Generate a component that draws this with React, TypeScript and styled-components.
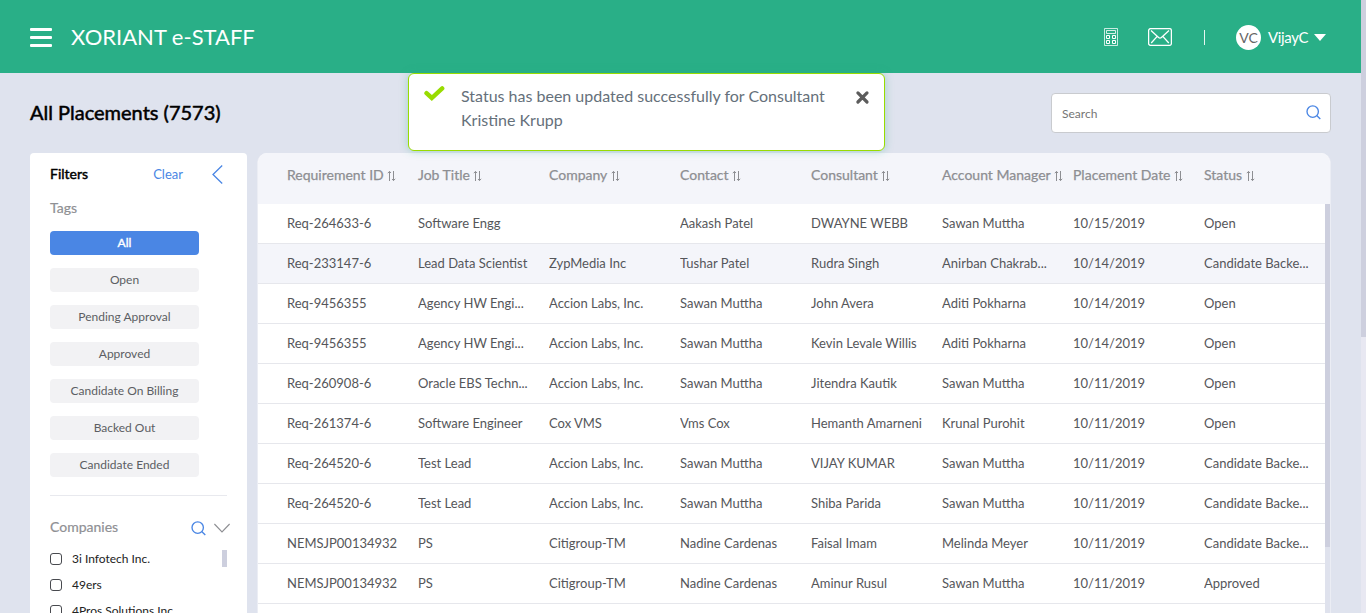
import React from "react";
import styled, { createGlobalStyle } from "styled-components";

const GlobalStyle = createGlobalStyle`
  * { box-sizing: border-box; }
  body {
    margin: 0;
    overflow: hidden;
    background: #dfe3ee;
    font-family: Lato, "Liberation Sans", sans-serif;
    color: #555;
  }
  button, input { font-family: inherit; }
`;

const Page = styled.div`
  display: grid;
  grid-template-columns: 1fr 5px;
  height: 613px;
  overflow: hidden;
`;

const Main = styled.div`
  display: flex;
  flex-direction: column;
  min-width: 0;
  height: 613px;
  overflow: hidden;
`;

const PageTrack = styled.div`
  background: #e8e8f2;
`;

const PageThumb = styled.div`
  height: 337px;
  background: #cdcfde;
`;

const Header = styled.header`
  display: flex;
  flex: none;
  align-items: center;
  height: 73px;
  padding: 0 35px 0 30px;
  background: #29af87;
  color: #fff;
`;

const MenuButton = styled.button`
  display: flex;
  flex-direction: column;
  gap: 5px;
  width: 22px;
  margin: 2px 19px 0 0;
  padding: 0;
  border: 0;
  background: none;
`;

const MenuBar = styled.span`
  height: 3px;
  border-radius: 1px;
  background: #fff;
`;

const Brand = styled.div`
  flex: 1;
  font-size: 22px;
  line-height: 26px;
`;

const HeaderTools = styled.div`
  display: flex;
  align-items: center;
  padding-top: 1px;
`;

const CalcSvg = styled.svg`
  margin-right: 30px;
`;

const MailSvg = styled.svg`
  margin-right: 32px;
`;

const Divider = styled.span`
  width: 1px;
  height: 15px;
  margin: 1px 31px 0 0;
  background: #e6f6f1;
`;

const Avatar = styled.span`
  display: flex;
  align-items: center;
  justify-content: center;
  width: 25px;
  height: 25px;
  margin-right: 7px;
  border-radius: 50%;
  background: #fff;
  color: #666;
  font-size: 14px;
`;

const UserName = styled.span`
  width: 40px;
  margin-top: -1px;
  font-size: 15px;
  letter-spacing: -0.35px;
`;

const Caret = styled.span`
  margin-left: 6px;
  border: 6px solid transparent;
  border-top: 7px solid #fff;
  border-bottom: 0;
`;

const TitleRow = styled.div`
  display: flex;
  flex: none;
  align-items: center;
  justify-content: space-between;
  height: 80px;
  padding: 0 30px;
`;

const Title = styled.h1`
  margin: 0 0 2px;
  color: #000;
  font-size: 20px;
  font-weight: 400;
  -webkit-text-stroke: 0.5px #000;
`;

const SearchBox = styled.label`
  display: flex;
  align-items: center;
  width: 280px;
  height: 40px;
  padding: 0 9px 2px 10px;
  border: 1px solid #c9cbcf;
  border-radius: 4px;
  background: #fff;
`;

const SearchInput = styled.input`
  flex: 1;
  min-width: 0;
  padding: 2px 0 0;
  border: 0;
  outline: 0;
  background: none;
  font-size: 12px;
  &::placeholder { color: #757575; opacity: 1; }
`;

const Content = styled.div`
  display: flex;
  gap: 10px;
  padding: 0 30px;
`;

const Sidebar = styled.aside`
  flex: none;
  width: 217px;
  height: 600px;
  padding: 11px 20px 0;
  border-radius: 4px 4px 0 0;
  background: #fff;
`;

const FilterHead = styled.div`
  display: flex;
  align-items: center;
  height: 20px;
`;

const FilterTitle = styled.h2`
  flex: 1;
  margin: 0;
  color: #000;
  font-size: 14px;
  font-weight: 400;
  line-height: 20px;
  -webkit-text-stroke: 0.45px #000;
`;

const ClearLink = styled.a`
  margin-right: 29px;
  color: #4a86e4;
  font-size: 13px;
  line-height: 20px;
`;

const BackSvg = styled.svg`
  margin: 1px 4px 0 0;
`;

const GroupTitle = styled.h3`
  flex: 1;
  margin: 0;
  color: #8f9094;
  font-size: 14px;
  font-weight: 400;
  line-height: 20px;
  -webkit-text-stroke: 0.2px #8f9094;
`;

const TagsTitle = styled(GroupTitle)`
  margin-top: 14px;
`;

const TagList = styled.div`
  display: flex;
  flex-direction: column;
  gap: 13px;
  width: 149px;
  margin-top: 13px;
`;

const Tag = styled.button<{ $active?: boolean }>`
  height: 24px;
  padding: 0 0 ${(p) => (p.$active ? "1px" : "2px")};
  border: 0;
  border-radius: 4px;
  background: ${(p) => (p.$active ? "#4a86e4" : "#f2f2f4")};
  color: ${(p) => (p.$active ? "#fff" : "#5c5e63")};
  font-size: 12px;
  -webkit-text-stroke: ${(p) => (p.$active ? "0.4px #fff" : "0")};
`;

const Rule = styled.hr`
  height: 1px;
  margin: 18px 0 21px;
  border: 0;
  width: 177px;
  background: #e8e9ee;
`;

const CompaniesHead = styled.div`
  display: flex;
  align-items: center;
  height: 20px;
  margin-right: -3px;
`;

const CompanySearch = styled.span`
  display: flex;
  margin: 3px 8px 0 0;
`;

const CompanyChevron = styled.svg`
  margin-top: 2px;
`;

const CompanyPanel = styled.div`
  display: flex;
  justify-content: space-between;
  margin-top: 9px;
`;

const CompanyList = styled.div`
  display: flex;
  flex-direction: column;
`;

const Company = styled.label`
  display: flex;
  align-items: center;
  gap: 10px;
  height: 26px;
  color: #222;
  font-size: 12px;
  white-space: nowrap;
`;

const CompanyName = styled.span`
  padding-bottom: 2px;
`;

const CheckBox = styled.span`
  width: 12px;
  height: 12px;
  border: 1px solid #484a4f;
  border-radius: 3px;
  background: #fff;
`;

const CompanyThumb = styled.div`
  width: 5px;
  height: 17px;
  margin-top: 4px;
  background: #cdcfde;
`;

const TableCard = styled.section`
  flex: 1;
  min-width: 0;
  height: 600px;
  border: 1px solid #ebedf4;
  border-top: 0;
  border-radius: 10px 10px 0 0;
  overflow: hidden;
  background: #fff;
`;

const TableHead = styled.div`
  display: grid;
  grid-template-columns: repeat(8, 131px);
  height: 51px;
  padding: 12px 0 0 29px;
  background: #f4f5fa;
`;

const HeadCell = styled.div`
  display: flex;
  align-items: flex-start;
  gap: 3.5px;
  color: #8d8e92;
  font-size: 14px;
  line-height: 20px;
  white-space: nowrap;
  -webkit-text-stroke: 0.25px #8d8e92;
`;

const SortSvg = styled.svg`
  flex: none;
  margin-top: 5px;
`;

const TableBody = styled.div`
  display: grid;
  grid-template-columns: minmax(0, 1fr) 5px;
`;

const Row = styled.div<{ $shade: boolean }>`
  display: grid;
  grid-template-columns: repeat(8, 131px);
  height: 40px;
  padding-left: 29px;
  border-bottom: 1px solid #e6e7ec;
  background: ${(p) => (p.$shade ? "#f4f5fa" : "#fff")};
  overflow: hidden;
`;

const Cell = styled.div`
  width: 112px;
  overflow: hidden;
  color: #55565a;
  font-size: 13px;
  line-height: 39px;
  text-overflow: ellipsis;
  white-space: nowrap;
`;

const TableTrack = styled.div`
  background: #dfe2ed;
`;

const TableThumb = styled.div`
  height: 343px;
  background: #cdcfde;
`;

const Toast = styled.div`
  position: absolute;
  top: 73px;
  left: 408px;
  display: flex;
  align-items: flex-start;
  width: 477px;
  height: 78px;
  padding: 11px 14px 0 15px;
  border: 1px solid #98dc00;
  border-radius: 6px;
  background: #fff;
  box-shadow: 0 0 8px rgba(41, 175, 135, 0.35);
`;

const ToastText = styled.p`
  flex: 1;
  margin: -1px 26px 0 15px;
  color: #65707a;
  font-size: 16px;
  line-height: 24px;
`;

const SearchIcon = () => (
  <svg width="15" height="15" viewBox="0 0 15 15" fill="none" stroke="#4a86e4" strokeWidth="1.35">
    <circle cx="6.7" cy="6.6" r="5.7" />
    <path d="M10.7 10.6 L14.3 14.1" />
  </svg>
);

const SortIcon = () => (
  <SortSvg width="9" height="12" viewBox="0 0 9 12" fill="none" stroke="#8d8e92" strokeWidth="1">
    <path d="M2.5 11V1.5M0.8 3.2L2.5 1.4L4 3M6.5 1V10.5M5 9L6.5 10.6L8.2 8.8" />
  </SortSvg>
);

const tags = ["All", "Open", "Pending Approval", "Approved", "Candidate On Billing", "Backed Out", "Candidate Ended"];
const companies = ["3i Infotech Inc.", "49ers", "4Pros Solutions Inc"];
const columns = ["Requirement ID", "Job Title", "Company", "Contact", "Consultant", "Account Manager", "Placement Date", "Status"];
const rows = [
  ["Req-264633-6", "Software Engg", "", "Aakash Patel", "DWAYNE WEBB", "Sawan Muttha", "10/15/2019", "Open"],
  ["Req-233147-6", "Lead Data Scientist", "ZypMedia Inc", "Tushar Patel", "Rudra Singh", "Anirban Chakrab...", "10/14/2019", "Candidate Backe..."],
  ["Req-9456355", "Agency HW Engi...", "Accion Labs, Inc.", "Sawan Muttha", "John Avera", "Aditi Pokharna", "10/14/2019", "Open"],
  ["Req-9456355", "Agency HW Engi...", "Accion Labs, Inc.", "Sawan Muttha", "Kevin Levale Willis", "Aditi Pokharna", "10/14/2019", "Open"],
  ["Req-260908-6", "Oracle EBS Techn...", "Accion Labs, Inc.", "Sawan Muttha", "Jitendra Kautik", "Sawan Muttha", "10/11/2019", "Open"],
  ["Req-261374-6", "Software Engineer", "Cox VMS", "Vms Cox", "Hemanth Amarneni", "Krunal Purohit", "10/11/2019", "Open"],
  ["Req-264520-6", "Test Lead", "Accion Labs, Inc.", "Sawan Muttha", "VIJAY KUMAR", "Sawan Muttha", "10/11/2019", "Candidate Backe..."],
  ["Req-264520-6", "Test Lead", "Accion Labs, Inc.", "Sawan Muttha", "Shiba Parida", "Sawan Muttha", "10/11/2019", "Candidate Backe..."],
  ["NEMSJP00134932", "PS", "Citigroup-TM", "Nadine Cardenas", "Faisal Imam", "Melinda Meyer", "10/11/2019", "Candidate Backe..."],
  ["NEMSJP00134932", "PS", "Citigroup-TM", "Nadine Cardenas", "Aminur Rusul", "Sawan Muttha", "10/11/2019", "Approved"],
  ["", "", "", "", "", "", "", ""],
];

export default function App() {
  return (
    <>
      <GlobalStyle />
      <Page>
        <Main>
          <Header>
            <MenuButton aria-label="Menu">
              <MenuBar />
              <MenuBar />
              <MenuBar />
            </MenuButton>
            <Brand>XORIANT e-STAFF</Brand>
            <HeaderTools>
              <CalcSvg width="14" height="18" viewBox="0 0 14 18" fill="none" stroke="#fff">
                <path strokeOpacity="0.75" d="M0.5 0.5h13v17h-13z" />
                <path strokeOpacity="0.8" d="M2.5 2.5h9v3h-9z" />
                <path d="M2.5 7.5h3v3h-3zM8.5 7.5h3v3h-3zM2.5 12.5h3v3h-3zM8.5 12.5h3v3h-3z" />
              </CalcSvg>
              <MailSvg width="24" height="18" viewBox="0 0 24 18" fill="none" stroke="#fff" strokeWidth="1.3">
                <rect x="0.6" y="0.6" width="22.8" height="16.8" rx="2" />
                <path d="M3 2.6L10.6 9.6Q12 10.8 13.4 9.6L21 2.6M3.2 15L9.2 8.4M20.8 15L14.8 8.4" />
              </MailSvg>
              <Divider />
              <Avatar>VC</Avatar>
              <UserName>VijayC</UserName>
              <Caret />
            </HeaderTools>
          </Header>
          <TitleRow>
            <Title>All Placements (7573)</Title>
            <SearchBox>
              <SearchInput placeholder="Search" />
              <SearchIcon />
            </SearchBox>
          </TitleRow>
          <Content>
            <Sidebar>
              <FilterHead>
                <FilterTitle>Filters</FilterTitle>
                <ClearLink>Clear</ClearLink>
                <BackSvg width="11" height="19" viewBox="0 0 11 19" fill="none" stroke="#4a86e4" strokeWidth="1.3">
                  <path d="M10.2 0.5L1 9.5L10.2 18.5" />
                </BackSvg>
              </FilterHead>
              <TagsTitle>Tags</TagsTitle>
              <TagList>
                {tags.map((t, i) => (
                  <Tag key={t} $active={i === 0}>{t}</Tag>
                ))}
              </TagList>
              <Rule />
              <CompaniesHead>
                <GroupTitle>Companies</GroupTitle>
                <CompanySearch><SearchIcon /></CompanySearch>
                <CompanyChevron width="16" height="10" viewBox="0 0 16 10" fill="none" stroke="#8d8e92" strokeWidth="1.1">
                  <path d="M0.4 1L8 9L15.6 1" />
                </CompanyChevron>
              </CompaniesHead>
              <CompanyPanel>
                <CompanyList>
                  {companies.map((c) => (
                    <Company key={c}>
                      <CheckBox />
                      <CompanyName>{c}</CompanyName>
                    </Company>
                  ))}
                </CompanyList>
                <CompanyThumb />
              </CompanyPanel>
            </Sidebar>
            <TableCard>
              <TableHead>
                {columns.map((c) => (
                  <HeadCell key={c}>
                    {c}
                    <SortIcon />
                  </HeadCell>
                ))}
              </TableHead>
              <TableBody>
                <div>
                  {rows.map((r, i) => (
                    <Row key={i} $shade={i === 1}>
                      {r.map((v, j) => (
                        <Cell key={j}>{v}</Cell>
                      ))}
                    </Row>
                  ))}
                </div>
                <TableTrack>
                  <TableThumb />
                </TableTrack>
              </TableBody>
            </TableCard>
          </Content>
        </Main>
        <PageTrack>
          <PageThumb />
        </PageTrack>
      </Page>
      <Toast role="status">
        <svg width="22" height="18" viewBox="0 0 22 18" fill="none" stroke="#98dc00" strokeWidth="4.4" strokeLinecap="round" strokeLinejoin="miter">
          <path d="M2.5 8.2L7.8 13L18.2 3.4" />
        </svg>
        <ToastText>Status has been updated successfully for Consultant Kristine Krupp</ToastText>
        <svg width="15" height="24" viewBox="0 0 15 24" fill="none" stroke="#5c5c5c" strokeWidth="3.2" strokeLinecap="round">
          <path d="M2.9 7.9L12 17M12 7.9L2.9 17" />
        </svg>
      </Toast>
    </>
  );
}
